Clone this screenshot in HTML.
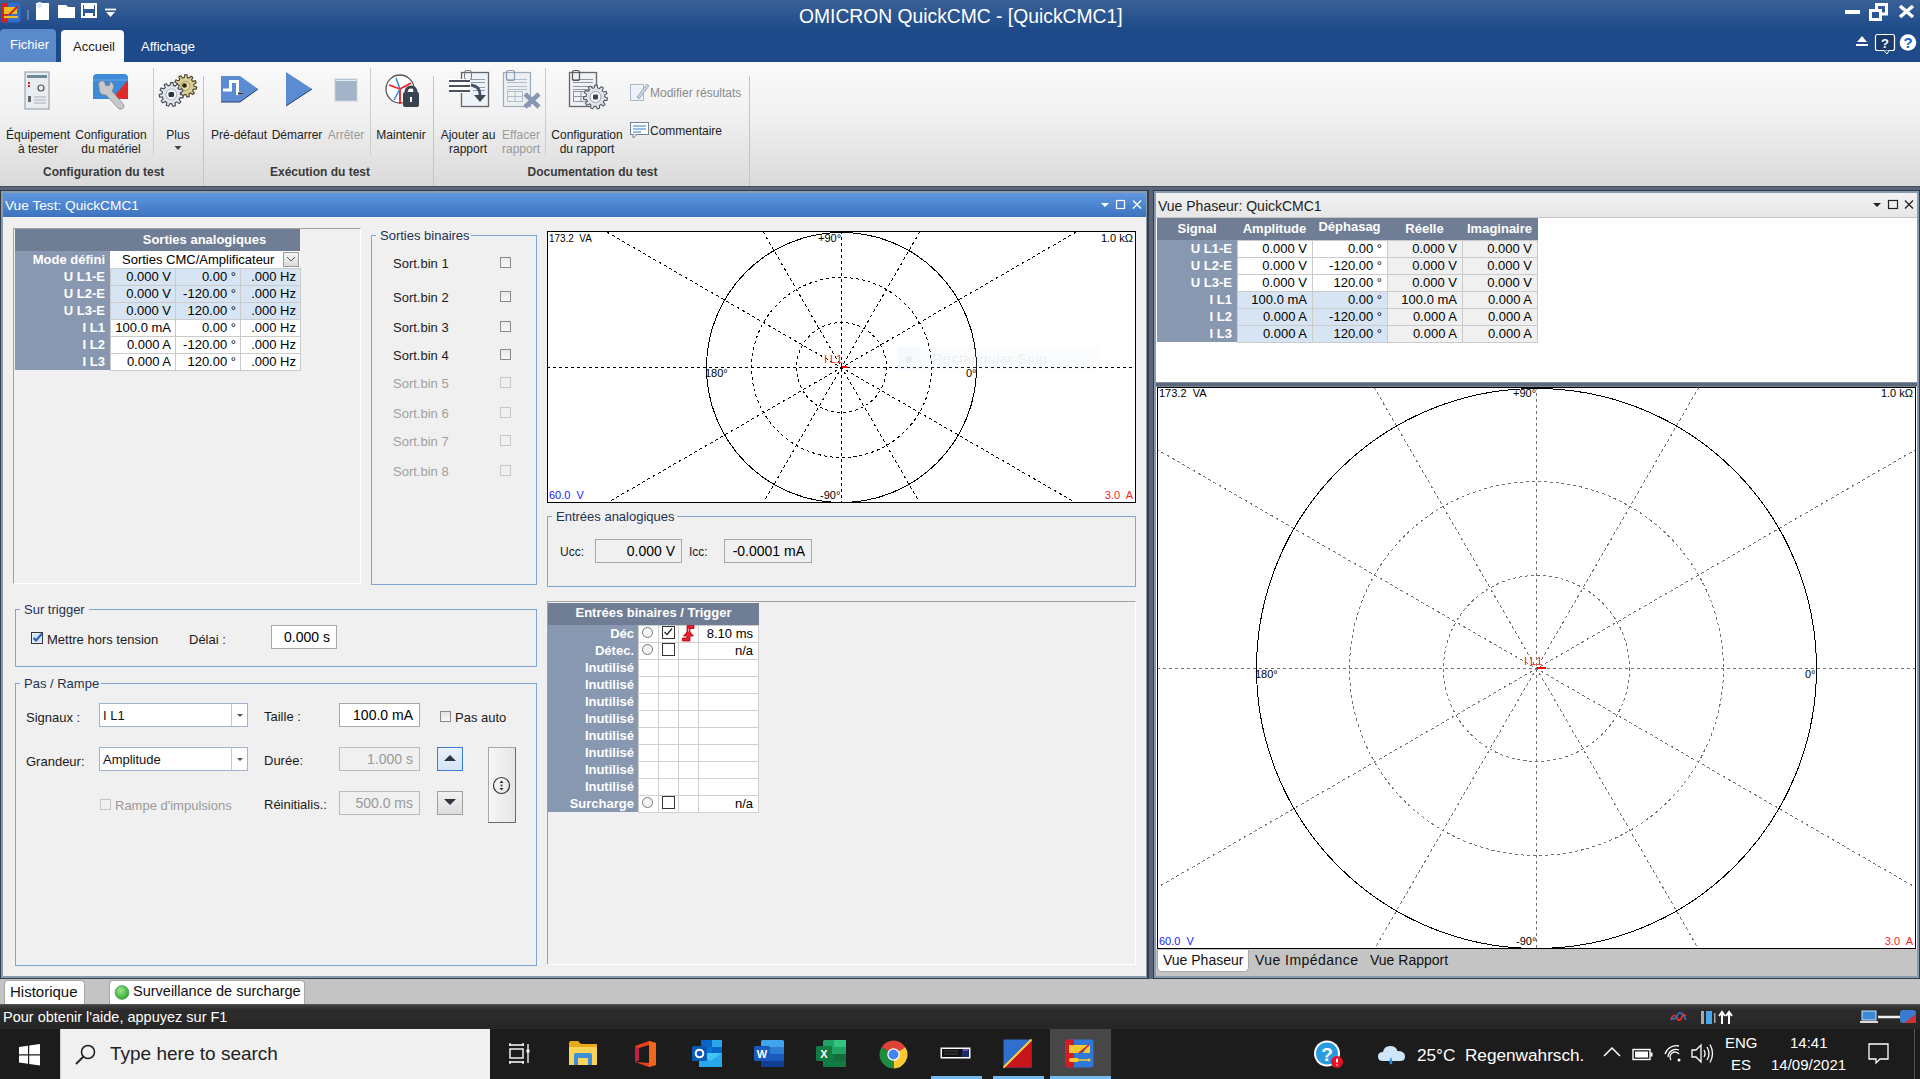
<!DOCTYPE html>
<html><head><meta charset="utf-8">
<style>
*{margin:0;padding:0;box-sizing:border-box}
html,body{width:1920px;height:1079px;overflow:hidden;background:#f0f0f0;font-family:"Liberation Sans",sans-serif;font-size:12px;color:#000}
.a{position:absolute}
.t{position:absolute;white-space:nowrap}
#titlebar{left:0;top:0;width:1920px;height:62px;background:linear-gradient(#3b6296 0px,#24508e 22px,#1e4a8a 30px,#1e4a8a 62px)}
#ribbon{left:0;top:62px;width:1920px;height:124px;background:linear-gradient(#fafafa,#f2f2f2 40%,#dadada)}
#band{left:0;top:186px;width:1920px;height:7px;background:#5a6679}
.gsep{position:absolute;top:66px;width:1px;height:118px;background:#c8c8c8}
.rl{position:absolute;text-align:center;color:#222;font-size:12px;line-height:14px;white-space:nowrap}
.glab{position:absolute;top:165px;font-size:12px;font-weight:bold;color:#3a3a3a;white-space:nowrap}
.win{position:absolute;background:#f0f0f0}
</style></head><body>
<!-- title bar -->
<div id="titlebar" class="a"></div>
<div class="t" style="left:799px;top:6px;font-size:19.3px;color:#fff">OMICRON QuickCMC - [QuickCMC1]</div>

<!-- quick access icons -->
<svg class="a" style="left:0;top:0" width="120" height="24" viewBox="0 0 120 24">
 <rect x="1" y="3" width="19.5" height="19.5" rx="2" fill="#2f6fd0"/>
 <path d="M1 5 L1 20.5 Q1 22.5 3 22.5 L8 22.5 L8 3 L3 3 Q1 3 1 5Z" fill="#d42020"/>
 <path d="M4 7 L17 7 L17 14 L4 14Z" fill="#f0c020"/>
 <path d="M4 17 L18 17" stroke="#f0c020" stroke-width="2.2"/>
 <path d="M9 15 L18 6" stroke="#d42020" stroke-width="1.8"/>
 <rect x="27.5" y="10" width="1" height="10" fill="#8fa6c8"/>
 <path d="M36 3 L49 3 L49 20 L36 20Z" fill="#fff"/>
 <circle cx="39.5" cy="5.5" r="3" fill="#d8e6ff" stroke="#fff"/>
 <path d="M58 5 L66 5 L68 7 L75 7 L75 18 L58 18Z" fill="#fff"/>
 <path d="M82 4 L96 4 L96 17 L82 17Z" fill="none" stroke="#fff" stroke-width="2"/>
 <rect x="84" y="4" width="10" height="5" fill="#fff"/>
 <rect x="85" y="13" width="8" height="4" fill="#fff"/>
 <path d="M105 9.5 L116 9.5" stroke="#fff" stroke-width="1.8"/>
 <path d="M106 12 L115 12 L110.5 17Z" fill="#fff"/>
</svg>
<!-- window controls -->
<svg class="a" style="left:1840px;top:0px" width="80" height="28" viewBox="0 0 80 28">
 <rect x="5" y="10" width="15" height="4" fill="#fff"/>
 <rect x="30.5" y="10.5" width="10" height="9" fill="none" stroke="#fff" stroke-width="3"/>
 <path d="M36.5 9 L36.5 4.5 L46.5 4.5 L46.5 14 L42 14" fill="none" stroke="#fff" stroke-width="3"/>
 <path d="M60 6 L73 17 M73 6 L60 17" stroke="#fff" stroke-width="3.6"/>
</svg>
<svg class="a" style="left:1852px;top:32px" width="68" height="24" viewBox="0 0 68 24">
 <path d="M5 10 L10 4 L15 10Z" fill="#fff"/><rect x="4" y="12" width="12" height="2" fill="#fff"/>
 <rect x="23.5" y="2.5" width="19" height="16" rx="2" fill="#1a3a6a" stroke="#fff" stroke-width="1.2"/>
 <path d="M32 18.5 L35 22 L37 18.5" fill="#1a3a6a" stroke="#fff"/>
 <text x="33" y="15.5" font-family="Liberation Sans" font-weight="bold" font-size="13" fill="#fff" text-anchor="middle">?</text>
 <circle cx="56" cy="10.5" r="8.3" fill="#fff"/>
 <text x="56" y="16" font-family="Liberation Sans" font-weight="bold" font-size="15" fill="#1565c0" text-anchor="middle">?</text>
</svg>
<!-- tabs -->
<div class="a" style="left:0;top:29px;width:56px;height:33px;background:#5b8acb;border-radius:4px 4px 0 0"></div>
<div class="t" style="left:10px;top:37px;font-size:13px;color:#fff">Fichier</div>
<div class="a" style="left:61px;top:30px;width:63px;height:33px;background:#fafafa;border-radius:4px 4px 0 0"></div>
<div class="t" style="left:73px;top:39px;font-size:13px;color:#222">Accueil</div>
<div class="t" style="left:141px;top:39px;font-size:13px;color:#fff">Affichage</div>
<!-- ribbon -->
<div id="ribbon" class="a"></div>
<div id="band" class="a"></div>
<!-- ribbon separators -->
<div class="a" style="left:153px;top:68px;width:1px;height:87px;background:#cdcdcd"></div>
<div class="a" style="left:203px;top:76px;width:1px;height:110px;background:#c4c4c4"></div>
<div class="a" style="left:370px;top:68px;width:1px;height:87px;background:#cdcdcd"></div>
<div class="a" style="left:433px;top:76px;width:1px;height:110px;background:#c4c4c4"></div>
<div class="a" style="left:545px;top:68px;width:1px;height:87px;background:#cdcdcd"></div>
<div class="a" style="left:749px;top:76px;width:1px;height:110px;background:#c4c4c4"></div>
<!-- ribbon labels -->
<div class="rl" style="left:0px;top:128px;width:76px">Équipement<br>à tester</div>
<div class="rl" style="left:72px;top:128px;width:78px">Configuration<br>du matériel</div>
<div class="rl" style="left:158px;top:128px;width:40px">Plus</div>
<svg class="a" style="left:173px;top:145px" width="10" height="6"><path d="M1.5 1 L8.5 1 L5 5Z" fill="#444"/></svg>
<div class="rl" style="left:206px;top:128px;width:66px">Pré-défaut</div>
<div class="rl" style="left:270px;top:128px;width:54px">Démarrer</div>
<div class="rl" style="left:324px;top:128px;width:44px;color:#9a9a9a">Arrêter</div>
<div class="rl" style="left:372px;top:128px;width:58px">Maintenir</div>
<div class="rl" style="left:436px;top:128px;width:64px">Ajouter au<br>rapport</div>
<div class="rl" style="left:500px;top:128px;width:42px;color:#9a9a9a">Effacer<br>rapport</div>
<div class="rl" style="left:548px;top:128px;width:78px">Configuration<br>du rapport</div>
<div class="t" style="left:650px;top:86px;color:#8a8a8a;font-size:12px">Modifier résultats</div>
<div class="t" style="left:650px;top:124px;color:#222;font-size:12px">Commentaire</div>
<div class="glab" style="left:43px;width:120px;text-align:center">Configuration du test</div>
<div class="glab" style="left:270px;width:100px;text-align:center">Exécution du test</div>
<div class="glab" style="left:527px;width:131px;text-align:center">Documentation du test</div>
<!-- ribbon icons -->
<svg class="a" style="left:0;top:66px" width="760" height="50" viewBox="0 66 760 50">
 <!-- equipement -->
 <rect x="25" y="72" width="24" height="37" fill="#e8edf2" stroke="#8a96a3"/>
 <rect x="27" y="75" width="20" height="3" fill="#6d8a95"/>
 <rect x="28" y="82" width="2" height="2" fill="#e02020"/><rect x="28" y="85" width="2" height="2" fill="#e02020"/>
 <circle cx="41" cy="88" r="3" fill="none" stroke="#555" stroke-width="1.2"/>
 <rect x="28" y="96" width="3" height="6" fill="#666"/>
 <path d="M34 97h12M34 100h12M34 103h12" stroke="#aab" stroke-width="1"/>
 <!-- config materiel -->
 <path d="M93 78 Q93 74 97 74 L124 74 Q128 74 128 78 L128 99 L93 99Z" fill="#3d8ad8"/>
 <path d="M93 80 L128 80" stroke="#6aa8e8" stroke-width="1"/>
 <path d="M128 80 L128 99 L112 99Z" fill="#e02a2a"/>
 <path d="M99 87 Q97 80 104 81 L106 86 L110 85 L110 81 Q116 85 112 91 L124 105 Q124 110 119 109 L106 95 Q99 96 99 87Z" fill="#c8c8c8" stroke="#888" stroke-width="0.8"/>
 <!-- gears -->
 <path d="M194.0 86.0 L196.7 87.0 L196.2 89.2 L193.4 89.1 L192.6 90.6 L194.3 92.9 L192.8 94.5 L190.5 93.0 L189.0 93.8 L189.2 96.6 L187.0 97.2 L185.9 94.6 L184.2 94.5 L182.8 97.0 L180.7 96.3 L181.2 93.5 L179.8 92.5 L177.3 93.9 L175.9 92.1 L177.8 90.0 L177.1 88.4 L174.3 88.2 L174.1 86.0 L176.8 85.3 L177.1 83.6 L174.9 81.9 L175.9 79.9 L178.6 80.7 L179.8 79.5 L178.8 76.9 L180.7 75.7 L182.5 77.9 L184.2 77.5 L184.8 74.7 L187.0 74.8 L187.3 77.6 L189.0 78.2 L191.0 76.2 L192.8 77.5 L191.6 80.0 L192.6 81.4 L195.4 80.7 L196.2 82.8 L193.8 84.3Z" fill="#d8cc98" stroke="#4a4020" stroke-width="1.1"/>
 <circle cx="185.4" cy="86" r="4.5" fill="#e8dcaa" stroke="#a89860" stroke-width="1"/>
 <circle cx="184.5" cy="85.5" r="2.3" fill="#2a2410"/>
 <path d="M180.5 94.5 L183.3 95.5 L182.8 97.9 L179.9 97.8 L179.0 99.5 L180.8 101.8 L179.2 103.6 L176.7 101.9 L175.1 102.9 L175.3 105.8 L173.0 106.4 L171.8 103.7 L170.0 103.6 L168.6 106.2 L166.3 105.4 L166.8 102.5 L165.3 101.5 L162.7 102.9 L161.2 101.0 L163.2 98.8 L162.5 97.1 L159.5 96.9 L159.3 94.5 L162.1 93.7 L162.5 91.9 L160.1 90.1 L161.2 88.0 L164.0 88.9 L165.3 87.5 L164.2 84.8 L166.3 83.6 L168.2 85.8 L170.0 85.4 L170.6 82.5 L173.0 82.6 L173.4 85.5 L175.1 86.1 L177.2 84.1 L179.2 85.4 L177.9 88.1 L179.0 89.5 L181.9 88.9 L182.8 91.1 L180.3 92.7Z" fill="#e4e8ee" stroke="#3a4450" stroke-width="1.1"/>
 <circle cx="171.3" cy="94.5" r="5.5" fill="#f6f8fa" stroke="#b0b8c0" stroke-width="1.2"/>
 <rect x="168.5" y="92" width="5.6" height="5" rx="1.5" fill="#2a3440"/>
 <!-- pre-defaut -->
 <path d="M221 76 L240 76 L258 89 L240 102 L221 102Z" fill="#5b8bd2"/>
 <path d="M240 102 L258 89" stroke="#2a3f66" stroke-width="1"/>
 <path d="M221 102 L240 102" stroke="#2a3f66" stroke-width="1"/>
 <path d="M223 90 L230.5 90 L230.5 81.5 L237.5 81.5 L237.5 93.5 L243 93.5" fill="none" stroke="#fff" stroke-width="3"/>
 <path d="M238 93.5 L243 93.5" stroke="#1a2a44" stroke-width="2"/>
 <!-- demarrer -->
 <path d="M286 72 L312 89 L286 106Z" fill="#5b8bd2"/>
 <path d="M312 89 L286 106" stroke="#2a3f66" stroke-width="1"/>
 <!-- arreter -->
 <rect x="335" y="79" width="22" height="22" fill="#a3b3c8" stroke="#c8d2e0" stroke-width="1"/>
 <path d="M336 80.5 L356 80.5" stroke="#e6ecf3" stroke-width="1"/>
 <!-- maintenir -->
 <circle cx="400" cy="89" r="14" fill="#fff" stroke="#555" stroke-width="1.3"/>
 <path d="M400 89 L389 85 M400 89 L411 83 M400 89 L400 104" stroke="#f02020" stroke-width="1.8"/>
 <path d="M400 89 L396 78 M400 89 L394 100" stroke="#2a8ae0" stroke-width="1.5"/>
 <path d="M406 93 Q406 87 411 87 Q416 87 416 93" fill="none" stroke="#3a4450" stroke-width="3"/>
 <rect x="403" y="92" width="16" height="15" rx="2" fill="#3a4450"/>
 <rect x="410" y="97" width="2" height="5" fill="#fff"/>
 <!-- ajouter au rapport -->
 <rect x="461.5" y="72.5" width="27" height="34" fill="#eef3fa" stroke="#666" stroke-width="1.3"/>
 <path d="M471 79.5h14M471 82.5h14M473 87.5h12M473 90.5h12" stroke="#7a8494" stroke-width="0.8"/>
 <rect x="464.5" y="70.5" width="7" height="9" rx="2" fill="none" stroke="#777" stroke-width="1"/>
 <rect x="449" y="79" width="21" height="14" fill="#fff"/>
 <path d="M449 81h21M449 86h21M449 91h21" stroke="#4a5260" stroke-width="1.8"/>
 <path d="M471 85 Q480 86 480 95" fill="none" stroke="#455366" stroke-width="3"/>
 <path d="M474 95 L486 95 L480 102Z" fill="#3a4858"/>
 <!-- effacer rapport -->
 <rect x="503.5" y="72.5" width="27" height="34" fill="#eef0f0" stroke="#9aaac0" stroke-width="1.2"/>
 <path d="M507 79.5h20M507 82.5h20M507 86.5h20M507 89.5h20" stroke="#aab8cc" stroke-width="0.9"/>
 <rect x="507.5" y="91.5" width="15" height="10" fill="none" stroke="#aab8cc" stroke-width="0.9"/>
 <path d="M515 91.5v10M507.5 96.5h15" stroke="#aab8cc" stroke-width="0.9"/>
 <rect x="506.5" y="70.5" width="8" height="10" rx="2" fill="none" stroke="#8a9cb8" stroke-width="1.2"/>
 <path d="M525 94 L539 107 M539 94 L525 107" stroke="#8797b3" stroke-width="4.5"/>
 <!-- config rapport -->
 <rect x="569.5" y="72.5" width="27" height="34" fill="#eef3fa" stroke="#666" stroke-width="1.3"/>
 <path d="M573 79.5h20M573 82.5h20M573 86.5h20M573 89.5h20" stroke="#8a8a8a" stroke-width="0.9"/>
 <rect x="573.5" y="91.5" width="15" height="10" fill="none" stroke="#8a8a8a" stroke-width="0.9"/>
 <path d="M581 91.5v10M573.5 96.5h15" stroke="#8a8a8a" stroke-width="0.9"/>
 <rect x="572.5" y="70.5" width="7" height="10" rx="2" fill="none" stroke="#555" stroke-width="1.2"/>
 <path d="M604.8 97.0 L607.5 98.0 L607.0 100.4 L604.2 100.4 L603.3 102.0 L605.0 104.3 L603.4 106.1 L601.0 104.5 L599.4 105.5 L599.5 108.3 L597.2 108.9 L596.0 106.3 L594.2 106.2 L592.8 108.7 L590.5 107.9 L590.9 105.1 L589.4 104.0 L586.9 105.4 L585.4 103.5 L587.3 101.3 L586.6 99.6 L583.7 99.4 L583.5 97.0 L586.2 96.2 L586.6 94.4 L584.3 92.6 L585.4 90.5 L588.1 91.3 L589.4 90.0 L588.4 87.3 L590.5 86.1 L592.4 88.2 L594.2 87.8 L594.8 85.0 L597.2 85.1 L597.6 87.9 L599.4 88.5 L601.4 86.6 L603.4 87.9 L602.2 90.5 L603.3 92.0 L606.1 91.4 L607.0 93.6 L604.6 95.2Z" fill="#dfe3e8" stroke="#555d66" stroke-width="1.1"/>
 <circle cx="595.5" cy="97" r="5.5" fill="#f4f6f8" stroke="#9aa0a8" stroke-width="1"/>
 <rect x="593" y="94.5" width="5" height="5" rx="1" fill="#3a4450"/>
 <!-- modifier resultats -->
 <rect x="630.5" y="84.5" width="13" height="16" fill="#eef2f6" stroke="#a8b8c8"/>
 <path d="M637 97 L647 84 L649 86 L639 99Z" fill="#c8d4e0" stroke="#8aa0b8" stroke-width="0.8"/>
 <!-- commentaire -->
 <rect x="630.5" y="122.5" width="18" height="13" fill="#fff" stroke="#7a8ca0"/>
</svg>
<svg class="a" style="left:630px;top:122px" width="20" height="18" viewBox="0 0 20 18">
 <rect x="0.5" y="0.5" width="18" height="12" fill="#fff" stroke="#6f8399"/>
 <path d="M3 4h13M3 7h13M3 10h8" stroke="#2f7ad8" stroke-width="1.2"/>
 <path d="M3 12.5 L3 16 L7 12.5" fill="#fff" stroke="#6f8399"/>
</svg>


<!-- left window -->
<div class="a" style="left:0;top:186px;width:1920px;height:793px;background:#5b6678"></div>
<div class="a" style="left:0;top:186px;width:1920px;height:1px;background:#474d57"></div>
<div class="a" style="left:0;top:190px;width:1149px;height:789px;background:#333d49"></div>
<div class="a" style="left:1px;top:191px;width:1146px;height:787px;background:#8a9ab0"></div>
<div class="a" style="left:3px;top:217px;width:1143px;height:759px;background:#f0f0f0"></div>
<div class="a" style="left:3px;top:193px;width:1143px;height:24px;background:linear-gradient(#5e98e0,#3d72be)"></div>
<div class="t" style="left:5px;top:198px;font-size:13.7px;color:#fff">Vue Test: QuickCMC1</div>
<svg class="a" style="left:1098px;top:197px" width="46" height="16" viewBox="0 0 46 16">
 <path d="M3 6 L11 6 L7 10Z" fill="#fff"/>
 <rect x="18.5" y="3.5" width="8" height="8" fill="none" stroke="#fff" stroke-width="1.2"/>
 <path d="M35 3.5 L43 11.5 M43 3.5 L35 11.5" stroke="#fff" stroke-width="1.3"/>
</svg>
<!--L1-->
<div class="a" style="left:13px;top:228px;width:348px;height:356px;border:1px solid #a0a0a0;border-right-color:#fff;border-bottom-color:#fff"></div>
<div class="a" style="left:15px;top:229px;width:285px;height:22px;background:#6f7e94"></div>
<div class="t" style="left:62px;top:232px;width:285px;text-align:center;font-weight:bold;font-size:13px;color:#fff">Sorties analogiques</div>
<div class="a" style="left:15px;top:251px;width:95px;height:119px;background:#8898b0"></div>
<div class="t" style="left:15px;top:251px;width:90px;text-align:right;font-weight:bold;font-size:13px;color:#fff;line-height:17px">Mode défini</div>
<div class="a" style="left:110px;top:251px;width:190px;height:17px;background:#fff"></div>
<div class="t" style="left:122px;top:251px;font-size:13px;line-height:17px">Sorties CMC/Amplificateur</div>
<div class="a" style="left:283px;top:252px;width:16px;height:15px;background:linear-gradient(#f4f4f4,#dcdcdc);border:1px solid #9a9a9a"></div>
<svg class="a" style="left:286px;top:255px" width="10" height="8"><path d="M1 2 L5 6 L9 2" fill="none" stroke="#555" stroke-width="1"/></svg>
<div class="t" style="left:15px;top:268px;width:90px;text-align:right;font-weight:bold;font-size:13px;color:#fff;line-height:17px">U L1-E</div>
<div class="a" style="left:110px;top:268px;width:66px;height:18px;background:#d6e4f3;border:1px solid #cbcbcb"></div>
<div class="t" style="left:110px;top:268px;width:61px;text-align:right;font-size:13px;line-height:17px">0.000 V</div>
<div class="a" style="left:175px;top:268px;width:66px;height:18px;background:#d6e4f3;border:1px solid #cbcbcb"></div>
<div class="t" style="left:175px;top:268px;width:61px;text-align:right;font-size:13px;line-height:17px">0.00 °</div>
<div class="a" style="left:240px;top:268px;width:61px;height:18px;background:#d6e4f3;border:1px solid #cbcbcb"></div>
<div class="t" style="left:240px;top:268px;width:56px;text-align:right;font-size:13px;line-height:17px">.000 Hz</div>
<div class="t" style="left:15px;top:285px;width:90px;text-align:right;font-weight:bold;font-size:13px;color:#fff;line-height:17px">U L2-E</div>
<div class="a" style="left:110px;top:285px;width:66px;height:18px;background:#d6e4f3;border:1px solid #cbcbcb"></div>
<div class="t" style="left:110px;top:285px;width:61px;text-align:right;font-size:13px;line-height:17px">0.000 V</div>
<div class="a" style="left:175px;top:285px;width:66px;height:18px;background:#d6e4f3;border:1px solid #cbcbcb"></div>
<div class="t" style="left:175px;top:285px;width:61px;text-align:right;font-size:13px;line-height:17px">-120.00 °</div>
<div class="a" style="left:240px;top:285px;width:61px;height:18px;background:#d6e4f3;border:1px solid #cbcbcb"></div>
<div class="t" style="left:240px;top:285px;width:56px;text-align:right;font-size:13px;line-height:17px">.000 Hz</div>
<div class="t" style="left:15px;top:302px;width:90px;text-align:right;font-weight:bold;font-size:13px;color:#fff;line-height:17px">U L3-E</div>
<div class="a" style="left:110px;top:302px;width:66px;height:18px;background:#d6e4f3;border:1px solid #cbcbcb"></div>
<div class="t" style="left:110px;top:302px;width:61px;text-align:right;font-size:13px;line-height:17px">0.000 V</div>
<div class="a" style="left:175px;top:302px;width:66px;height:18px;background:#d6e4f3;border:1px solid #cbcbcb"></div>
<div class="t" style="left:175px;top:302px;width:61px;text-align:right;font-size:13px;line-height:17px">120.00 °</div>
<div class="a" style="left:240px;top:302px;width:61px;height:18px;background:#d6e4f3;border:1px solid #cbcbcb"></div>
<div class="t" style="left:240px;top:302px;width:56px;text-align:right;font-size:13px;line-height:17px">.000 Hz</div>
<div class="t" style="left:15px;top:319px;width:90px;text-align:right;font-weight:bold;font-size:13px;color:#fff;line-height:17px">I L1</div>
<div class="a" style="left:110px;top:319px;width:66px;height:18px;background:#fff;border:1px solid #cbcbcb"></div>
<div class="t" style="left:110px;top:319px;width:61px;text-align:right;font-size:13px;line-height:17px">100.0 mA</div>
<div class="a" style="left:175px;top:319px;width:66px;height:18px;background:#fff;border:1px solid #cbcbcb"></div>
<div class="t" style="left:175px;top:319px;width:61px;text-align:right;font-size:13px;line-height:17px">0.00 °</div>
<div class="a" style="left:240px;top:319px;width:61px;height:18px;background:#fff;border:1px solid #cbcbcb"></div>
<div class="t" style="left:240px;top:319px;width:56px;text-align:right;font-size:13px;line-height:17px">.000 Hz</div>
<div class="t" style="left:15px;top:336px;width:90px;text-align:right;font-weight:bold;font-size:13px;color:#fff;line-height:17px">I L2</div>
<div class="a" style="left:110px;top:336px;width:66px;height:18px;background:#fff;border:1px solid #cbcbcb"></div>
<div class="t" style="left:110px;top:336px;width:61px;text-align:right;font-size:13px;line-height:17px">0.000 A</div>
<div class="a" style="left:175px;top:336px;width:66px;height:18px;background:#fff;border:1px solid #cbcbcb"></div>
<div class="t" style="left:175px;top:336px;width:61px;text-align:right;font-size:13px;line-height:17px">-120.00 °</div>
<div class="a" style="left:240px;top:336px;width:61px;height:18px;background:#fff;border:1px solid #cbcbcb"></div>
<div class="t" style="left:240px;top:336px;width:56px;text-align:right;font-size:13px;line-height:17px">.000 Hz</div>
<div class="t" style="left:15px;top:353px;width:90px;text-align:right;font-weight:bold;font-size:13px;color:#fff;line-height:17px">I L3</div>
<div class="a" style="left:110px;top:353px;width:66px;height:18px;background:#fff;border:1px solid #cbcbcb"></div>
<div class="t" style="left:110px;top:353px;width:61px;text-align:right;font-size:13px;line-height:17px">0.000 A</div>
<div class="a" style="left:175px;top:353px;width:66px;height:18px;background:#fff;border:1px solid #cbcbcb"></div>
<div class="t" style="left:175px;top:353px;width:61px;text-align:right;font-size:13px;line-height:17px">120.00 °</div>
<div class="a" style="left:240px;top:353px;width:61px;height:18px;background:#fff;border:1px solid #cbcbcb"></div>
<div class="t" style="left:240px;top:353px;width:56px;text-align:right;font-size:13px;line-height:17px">.000 Hz</div>
<div class="a" style="left:371px;top:235px;width:166px;height:350px;border:1px solid #7ea6d3"></div>
<div class="a" style="left:376px;top:228px;width:95px;height:14px;background:#f0f0f0"></div>
<div class="t" style="left:380px;top:228px;font-size:13px;color:#1e3250">Sorties binaires</div>
<div class="t" style="left:393px;top:256px;font-size:13px;color:#1a1a1a">Sort.bin 1</div>
<div class="a" style="left:500px;top:257px;width:11px;height:11px;border:1px solid #8a8a8a;background:linear-gradient(#e8e8e8,#f8f8f8)"></div>
<div class="t" style="left:393px;top:290px;font-size:13px;color:#1a1a1a">Sort.bin 2</div>
<div class="a" style="left:500px;top:291px;width:11px;height:11px;border:1px solid #8a8a8a;background:linear-gradient(#e8e8e8,#f8f8f8)"></div>
<div class="t" style="left:393px;top:320px;font-size:13px;color:#1a1a1a">Sort.bin 3</div>
<div class="a" style="left:500px;top:321px;width:11px;height:11px;border:1px solid #8a8a8a;background:linear-gradient(#e8e8e8,#f8f8f8)"></div>
<div class="t" style="left:393px;top:348px;font-size:13px;color:#1a1a1a">Sort.bin 4</div>
<div class="a" style="left:500px;top:349px;width:11px;height:11px;border:1px solid #8a8a8a;background:linear-gradient(#e8e8e8,#f8f8f8)"></div>
<div class="t" style="left:393px;top:376px;font-size:13px;color:#a0a0a0">Sort.bin 5</div>
<div class="a" style="left:500px;top:377px;width:11px;height:11px;border:1px solid #c8c8c8;background:#f0f0f0"></div>
<div class="t" style="left:393px;top:406px;font-size:13px;color:#a0a0a0">Sort.bin 6</div>
<div class="a" style="left:500px;top:407px;width:11px;height:11px;border:1px solid #c8c8c8;background:#f0f0f0"></div>
<div class="t" style="left:393px;top:434px;font-size:13px;color:#a0a0a0">Sort.bin 7</div>
<div class="a" style="left:500px;top:435px;width:11px;height:11px;border:1px solid #c8c8c8;background:#f0f0f0"></div>
<div class="t" style="left:393px;top:464px;font-size:13px;color:#a0a0a0">Sort.bin 8</div>
<div class="a" style="left:500px;top:465px;width:11px;height:11px;border:1px solid #c8c8c8;background:#f0f0f0"></div>
<div class="a" style="left:547px;top:516px;width:589px;height:71px;border:1px solid #7ea6d3"></div>
<div class="a" style="left:552px;top:510px;width:125px;height:12px;background:#f0f0f0"></div>
<div class="t" style="left:556px;top:509px;font-size:13px;color:#1e3250">Entrées analogiques</div>
<div class="t" style="left:560px;top:545px;font-size:12px;color:#1a1a1a">Ucc:</div>
<div class="a" style="left:595px;top:539px;width:87px;height:24px;background:#f0f0f0;border:1px solid #a8a8a8"></div>
<div class="t" style="left:595px;top:539px;width:80px;text-align:right;font-size:14px;color:#000;line-height:24px">0.000 V</div>
<div class="t" style="left:689px;top:545px;font-size:12px;color:#1a1a1a">Icc:</div>
<div class="a" style="left:724px;top:539px;width:88px;height:24px;background:#f0f0f0;border:1px solid #a8a8a8"></div>
<div class="t" style="left:724px;top:539px;width:81px;text-align:right;font-size:14px;color:#000;line-height:24px">-0.0001 mA</div>
<div class="a" style="left:15px;top:609px;width:522px;height:58px;border:1px solid #7ea6d3"></div>
<div class="a" style="left:20px;top:603px;width:69px;height:12px;background:#f0f0f0"></div>
<div class="t" style="left:24px;top:602px;font-size:13px;color:#1e3250">Sur trigger</div>
<svg class="a" style="left:31px;top:632px" width="14" height="14" viewBox="0 0 14 14"><rect x="0.5" y="0.5" width="11" height="11" fill="#fff" stroke="#333"/><rect x="1.5" y="1.5" width="9" height="9" fill="#cfe2f6"/><path d="M2.5 6 L5 8.5 L11 1.5" fill="none" stroke="#2a5fb0" stroke-width="2"/></svg>
<div class="t" style="left:47px;top:632px;font-size:13px;color:#1a1a1a">Mettre hors tension</div>
<div class="t" style="left:189px;top:632px;font-size:13px;color:#1a1a1a">Délai :</div>
<div class="a" style="left:271px;top:625px;width:66px;height:24px;background:#fff;border:1px solid #a8a8a8"></div>
<div class="t" style="left:271px;top:625px;width:59px;text-align:right;font-size:14px;color:#000;line-height:24px">0.000 s</div>
<div class="a" style="left:15px;top:683px;width:522px;height:283px;border:1px solid #7ea6d3"></div>
<div class="a" style="left:20px;top:677px;width:81px;height:12px;background:#f0f0f0"></div>
<div class="t" style="left:24px;top:676px;font-size:13px;color:#1e3250">Pas / Rampe</div>
<div class="t" style="left:26px;top:710px;font-size:13px;color:#1a1a1a">Signaux :</div>
<div class="a" style="left:99px;top:703px;width:149px;height:24px;background:#fff;border:1px solid #9fb4cc"></div>
<div class="a" style="left:231px;top:704px;width:1px;height:22px;background:#c8c8c8"></div>
<svg class="a" style="left:236px;top:713px" width="8" height="5"><path d="M1 1 L7 1 L4 4Z" fill="#555"/></svg>
<div class="t" style="left:103px;top:704px;font-size:13px;line-height:24px;color:#111">I L1</div>
<div class="t" style="left:264px;top:709px;font-size:13px;color:#1a1a1a">Taille :</div>
<div class="a" style="left:339px;top:703px;width:81px;height:24px;background:#fff;border:1px solid #a8a8a8"></div>
<div class="t" style="left:339px;top:703px;width:74px;text-align:right;font-size:14px;color:#000;line-height:24px">100.0 mA</div>
<div class="a" style="left:440px;top:711px;width:11px;height:11px;border:1px solid #8a8a8a;background:linear-gradient(#e4e4e4,#f8f8f8)"></div>
<div class="t" style="left:455px;top:710px;font-size:13px;color:#1a1a1a">Pas auto</div>
<div class="t" style="left:26px;top:754px;font-size:13px;color:#1a1a1a">Grandeur:</div>
<div class="a" style="left:99px;top:747px;width:149px;height:24px;background:#fff;border:1px solid #9fb4cc"></div>
<div class="a" style="left:231px;top:748px;width:1px;height:22px;background:#c8c8c8"></div>
<svg class="a" style="left:236px;top:757px" width="8" height="5"><path d="M1 1 L7 1 L4 4Z" fill="#555"/></svg>
<div class="t" style="left:103px;top:748px;font-size:13px;line-height:24px;color:#111">Amplitude</div>
<div class="t" style="left:264px;top:753px;font-size:13px;color:#1a1a1a">Durée:</div>
<div class="a" style="left:339px;top:747px;width:81px;height:24px;background:#f0f0f0;border:1px solid #bcbcbc"></div>
<div class="t" style="left:339px;top:747px;width:74px;text-align:right;font-size:14px;color:#9a9a9a;line-height:24px">1.000 s</div>
<div class="a" style="left:437px;top:747px;width:26px;height:24px;border:1px solid #3c7fd0;background:linear-gradient(#eaf2fb,#d4e4f6)"></div>
<svg class="a" style="left:443px;top:753px" width="14" height="10"><path d="M1 8 L13 8 L7 2Z" fill="#2f3640"/></svg>
<div class="a" style="left:100px;top:799px;width:11px;height:11px;border:1px solid #c4c4c4;background:#f0f0f0"></div>
<div class="t" style="left:115px;top:798px;font-size:13px;color:#9a9a9a">Rampe d'impulsions</div>
<div class="t" style="left:264px;top:797px;font-size:13px;color:#1a1a1a">Réinitialis.:</div>
<div class="a" style="left:339px;top:791px;width:81px;height:24px;background:#f0f0f0;border:1px solid #bcbcbc"></div>
<div class="t" style="left:339px;top:791px;width:74px;text-align:right;font-size:14px;color:#9a9a9a;line-height:24px">500.0 ms</div>
<div class="a" style="left:437px;top:791px;width:26px;height:24px;border:1px solid #a0a0a0;background:linear-gradient(#f2f2f2,#dcdcdc)"></div>
<svg class="a" style="left:443px;top:797px" width="14" height="10"><path d="M1 2 L13 2 L7 8Z" fill="#2f3640"/></svg>
<div class="a" style="left:488px;top:747px;width:28px;height:76px;border:1px solid #a8a8a8;border-right-color:#6a6a6a;border-bottom-color:#6a6a6a;background:linear-gradient(90deg,#f6f6f6,#e6e6e6)"></div>
<svg class="a" style="left:492px;top:776px" width="20" height="20" viewBox="0 0 20 20"><circle cx="9.5" cy="9.5" r="8" fill="none" stroke="#333" stroke-width="1.2"/><path d="M9.5 4.5 L7.5 7 L11.5 7Z M9.5 14.5 L7.5 12 L11.5 12Z" fill="#333"/><circle cx="9.5" cy="9.5" r="1" fill="#333"/></svg>
<div class="a" style="left:547px;top:601px;width:589px;height:364px;border:1px solid #a0a0a0;border-right-color:#fff;border-bottom-color:#fff"></div>
<div class="a" style="left:548px;top:603px;width:211px;height:22px;background:#6f7e94"></div>
<div class="t" style="left:548px;top:605px;width:211px;text-align:center;font-weight:bold;font-size:13px;color:#fff">Entrées binaires / Trigger</div>
<div class="a" style="left:548px;top:625px;width:91px;height:187px;background:#8898b0"></div>
<div class="t" style="left:548px;top:625px;width:86px;text-align:right;font-weight:bold;font-size:13px;color:#fff;line-height:17px">Déc</div>
<div class="a" style="left:638px;top:625px;width:21px;height:18px;background:#fff;border:1px solid #cfcfcf"></div>
<div class="a" style="left:658px;top:625px;width:21px;height:18px;background:#fff;border:1px solid #cfcfcf"></div>
<div class="a" style="left:678px;top:625px;width:21px;height:18px;background:#fff;border:1px solid #cfcfcf"></div>
<div class="a" style="left:698px;top:625px;width:61px;height:18px;background:#fff;border:1px solid #cfcfcf"></div>
<div class="t" style="left:548px;top:642px;width:86px;text-align:right;font-weight:bold;font-size:13px;color:#fff;line-height:17px">Détec.</div>
<div class="a" style="left:638px;top:642px;width:21px;height:18px;background:#fff;border:1px solid #cfcfcf"></div>
<div class="a" style="left:658px;top:642px;width:21px;height:18px;background:#fff;border:1px solid #cfcfcf"></div>
<div class="a" style="left:678px;top:642px;width:21px;height:18px;background:#fff;border:1px solid #cfcfcf"></div>
<div class="a" style="left:698px;top:642px;width:61px;height:18px;background:#fff;border:1px solid #cfcfcf"></div>
<div class="t" style="left:548px;top:659px;width:86px;text-align:right;font-weight:bold;font-size:13px;color:#fff;line-height:17px">Inutilisé</div>
<div class="a" style="left:638px;top:659px;width:21px;height:18px;background:#fff;border:1px solid #cfcfcf"></div>
<div class="a" style="left:658px;top:659px;width:21px;height:18px;background:#fff;border:1px solid #cfcfcf"></div>
<div class="a" style="left:678px;top:659px;width:21px;height:18px;background:#fff;border:1px solid #cfcfcf"></div>
<div class="a" style="left:698px;top:659px;width:61px;height:18px;background:#fff;border:1px solid #cfcfcf"></div>
<div class="t" style="left:548px;top:676px;width:86px;text-align:right;font-weight:bold;font-size:13px;color:#fff;line-height:17px">Inutilisé</div>
<div class="a" style="left:638px;top:676px;width:21px;height:18px;background:#fff;border:1px solid #cfcfcf"></div>
<div class="a" style="left:658px;top:676px;width:21px;height:18px;background:#fff;border:1px solid #cfcfcf"></div>
<div class="a" style="left:678px;top:676px;width:21px;height:18px;background:#fff;border:1px solid #cfcfcf"></div>
<div class="a" style="left:698px;top:676px;width:61px;height:18px;background:#fff;border:1px solid #cfcfcf"></div>
<div class="t" style="left:548px;top:693px;width:86px;text-align:right;font-weight:bold;font-size:13px;color:#fff;line-height:17px">Inutilisé</div>
<div class="a" style="left:638px;top:693px;width:21px;height:18px;background:#fff;border:1px solid #cfcfcf"></div>
<div class="a" style="left:658px;top:693px;width:21px;height:18px;background:#fff;border:1px solid #cfcfcf"></div>
<div class="a" style="left:678px;top:693px;width:21px;height:18px;background:#fff;border:1px solid #cfcfcf"></div>
<div class="a" style="left:698px;top:693px;width:61px;height:18px;background:#fff;border:1px solid #cfcfcf"></div>
<div class="t" style="left:548px;top:710px;width:86px;text-align:right;font-weight:bold;font-size:13px;color:#fff;line-height:17px">Inutilisé</div>
<div class="a" style="left:638px;top:710px;width:21px;height:18px;background:#fff;border:1px solid #cfcfcf"></div>
<div class="a" style="left:658px;top:710px;width:21px;height:18px;background:#fff;border:1px solid #cfcfcf"></div>
<div class="a" style="left:678px;top:710px;width:21px;height:18px;background:#fff;border:1px solid #cfcfcf"></div>
<div class="a" style="left:698px;top:710px;width:61px;height:18px;background:#fff;border:1px solid #cfcfcf"></div>
<div class="t" style="left:548px;top:727px;width:86px;text-align:right;font-weight:bold;font-size:13px;color:#fff;line-height:17px">Inutilisé</div>
<div class="a" style="left:638px;top:727px;width:21px;height:18px;background:#fff;border:1px solid #cfcfcf"></div>
<div class="a" style="left:658px;top:727px;width:21px;height:18px;background:#fff;border:1px solid #cfcfcf"></div>
<div class="a" style="left:678px;top:727px;width:21px;height:18px;background:#fff;border:1px solid #cfcfcf"></div>
<div class="a" style="left:698px;top:727px;width:61px;height:18px;background:#fff;border:1px solid #cfcfcf"></div>
<div class="t" style="left:548px;top:744px;width:86px;text-align:right;font-weight:bold;font-size:13px;color:#fff;line-height:17px">Inutilisé</div>
<div class="a" style="left:638px;top:744px;width:21px;height:18px;background:#fff;border:1px solid #cfcfcf"></div>
<div class="a" style="left:658px;top:744px;width:21px;height:18px;background:#fff;border:1px solid #cfcfcf"></div>
<div class="a" style="left:678px;top:744px;width:21px;height:18px;background:#fff;border:1px solid #cfcfcf"></div>
<div class="a" style="left:698px;top:744px;width:61px;height:18px;background:#fff;border:1px solid #cfcfcf"></div>
<div class="t" style="left:548px;top:761px;width:86px;text-align:right;font-weight:bold;font-size:13px;color:#fff;line-height:17px">Inutilisé</div>
<div class="a" style="left:638px;top:761px;width:21px;height:18px;background:#fff;border:1px solid #cfcfcf"></div>
<div class="a" style="left:658px;top:761px;width:21px;height:18px;background:#fff;border:1px solid #cfcfcf"></div>
<div class="a" style="left:678px;top:761px;width:21px;height:18px;background:#fff;border:1px solid #cfcfcf"></div>
<div class="a" style="left:698px;top:761px;width:61px;height:18px;background:#fff;border:1px solid #cfcfcf"></div>
<div class="t" style="left:548px;top:778px;width:86px;text-align:right;font-weight:bold;font-size:13px;color:#fff;line-height:17px">Inutilisé</div>
<div class="a" style="left:638px;top:778px;width:21px;height:18px;background:#fff;border:1px solid #cfcfcf"></div>
<div class="a" style="left:658px;top:778px;width:21px;height:18px;background:#fff;border:1px solid #cfcfcf"></div>
<div class="a" style="left:678px;top:778px;width:21px;height:18px;background:#fff;border:1px solid #cfcfcf"></div>
<div class="a" style="left:698px;top:778px;width:61px;height:18px;background:#fff;border:1px solid #cfcfcf"></div>
<div class="t" style="left:548px;top:795px;width:86px;text-align:right;font-weight:bold;font-size:13px;color:#fff;line-height:17px">Surcharge</div>
<div class="a" style="left:638px;top:795px;width:21px;height:18px;background:#fff;border:1px solid #cfcfcf"></div>
<div class="a" style="left:658px;top:795px;width:21px;height:18px;background:#fff;border:1px solid #cfcfcf"></div>
<div class="a" style="left:678px;top:795px;width:21px;height:18px;background:#fff;border:1px solid #cfcfcf"></div>
<div class="a" style="left:698px;top:795px;width:61px;height:18px;background:#fff;border:1px solid #cfcfcf"></div>
<svg class="a" style="left:642px;top:627px" width="12" height="12"><circle cx="5.5" cy="5.5" r="5" fill="#f4f4f4" stroke="#777" stroke-width="1"/></svg>
<svg class="a" style="left:662px;top:626px" width="14" height="14"><rect x="0.5" y="0.5" width="12" height="12" fill="#fff" stroke="#333"/><path d="M2.5 6 L5 8.5 L10 2.5" fill="none" stroke="#222" stroke-width="1.2"/></svg>
<svg class="a" style="left:682px;top:625px" width="13" height="17" viewBox="0 0 13 17"><path d="M5 0.5 L12 0.5 L12 3.5 L8 3.5 L8 7 L11.5 11 L8 11 L8 16 L0.5 16 L0.5 13 L5 13 L5 11 L1.5 11 L5 7Z" fill="#e8202a" stroke="#b00010" stroke-width="0.8"/><path d="M6.5 4 L6.5 6.5" stroke="#ffb0b0" stroke-width="1"/></svg>
<div class="t" style="left:698px;top:625px;width:55px;text-align:right;font-size:13px;line-height:17px">8.10 ms</div>
<svg class="a" style="left:642px;top:644px" width="12" height="12"><circle cx="5.5" cy="5.5" r="5" fill="#f4f4f4" stroke="#777" stroke-width="1"/></svg>
<svg class="a" style="left:662px;top:643px" width="14" height="14"><rect x="0.5" y="0.5" width="12" height="12" fill="#fff" stroke="#333"/></svg>
<div class="t" style="left:698px;top:642px;width:55px;text-align:right;font-size:13px;line-height:17px">n/a</div>
<svg class="a" style="left:642px;top:797px" width="12" height="12"><circle cx="5.5" cy="5.5" r="5" fill="#f4f4f4" stroke="#777" stroke-width="1"/></svg>
<svg class="a" style="left:662px;top:796px" width="14" height="14"><rect x="0.5" y="0.5" width="12" height="12" fill="#fff" stroke="#333"/></svg>
<div class="t" style="left:698px;top:795px;width:55px;text-align:right;font-size:13px;line-height:17px">n/a</div>
<!--/L1-->
<!-- right window -->
<div class="a" style="left:1153px;top:190px;width:767px;height:789px;background:#333d49"></div>
<div class="a" style="left:1154px;top:191px;width:765px;height:787px;background:#8a9ab0"></div>
<div class="a" style="left:1156px;top:217px;width:761px;height:734px;background:#fff"></div>
<div class="a" style="left:1156px;top:217px;width:761px;height:1px;background:#c4c4c4"></div>
<div class="a" style="left:1156px;top:193px;width:761px;height:24px;background:linear-gradient(#f2f2f2,#e6e6e6)"></div>
<div class="t" style="left:1158px;top:198px;font-size:14px;color:#222">Vue Phaseur: QuickCMC1</div>
<svg class="a" style="left:1868px;top:197px" width="50" height="16" viewBox="0 0 50 16">
 <path d="M5 6 L13 6 L9 10Z" fill="#222"/>
 <rect x="20.5" y="3.5" width="9" height="8" fill="none" stroke="#222" stroke-width="1.2"/>
 <path d="M37 3.5 L45 11.5 M45 3.5 L37 11.5" stroke="#222" stroke-width="1.3"/>
</svg>
<div class="a" style="left:1156px;top:382px;width:761px;height:5px;background:linear-gradient(#9aa6b6,#5a6679 30%,#5a6679 70%,#8a96a6)"></div>
<div class="a" style="left:1156px;top:949px;width:761px;height:27px;background:#c4c4c4"></div>
<!--R1-->
<div class="a" style="left:1157px;top:218px;width:381px;height:22px;background:#6f7e94"></div>
<div class="t" style="left:1157px;top:221px;width:80px;text-align:center;font-weight:bold;font-size:13px;color:#fff">Signal</div>
<div class="t" style="left:1237px;top:221px;width:75px;text-align:center;font-weight:bold;font-size:13px;color:#fff">Amplitude</div>
<div class="t" style="left:1312px;top:219px;width:75px;text-align:center;font-weight:bold;font-size:13px;color:#fff">Déphasag</div>
<div class="t" style="left:1387px;top:221px;width:75px;text-align:center;font-weight:bold;font-size:13px;color:#fff">Réelle</div>
<div class="t" style="left:1462px;top:221px;width:75px;text-align:center;font-weight:bold;font-size:13px;color:#fff">Imaginaire</div>
<div class="a" style="left:1157px;top:240px;width:80px;height:102px;background:#8898b0"></div>
<div class="t" style="left:1157px;top:240px;width:75px;text-align:right;font-weight:bold;font-size:13px;color:#fff;line-height:17px">U L1-E</div>
<div class="a" style="left:1237px;top:240px;width:76px;height:18px;background:#fff;border:1px solid #cbcbcb"></div>
<div class="t" style="left:1237px;top:240px;width:70px;text-align:right;font-size:13px;line-height:17px">0.000 V</div>
<div class="a" style="left:1312px;top:240px;width:76px;height:18px;background:#fff;border:1px solid #cbcbcb"></div>
<div class="t" style="left:1312px;top:240px;width:70px;text-align:right;font-size:13px;line-height:17px">0.00 °</div>
<div class="a" style="left:1387px;top:240px;width:76px;height:18px;background:#f0f0f0;border:1px solid #cbcbcb"></div>
<div class="t" style="left:1387px;top:240px;width:70px;text-align:right;font-size:13px;line-height:17px">0.000 V</div>
<div class="a" style="left:1462px;top:240px;width:76px;height:18px;background:#f0f0f0;border:1px solid #cbcbcb"></div>
<div class="t" style="left:1462px;top:240px;width:70px;text-align:right;font-size:13px;line-height:17px">0.000 V</div>
<div class="t" style="left:1157px;top:257px;width:75px;text-align:right;font-weight:bold;font-size:13px;color:#fff;line-height:17px">U L2-E</div>
<div class="a" style="left:1237px;top:257px;width:76px;height:18px;background:#fff;border:1px solid #cbcbcb"></div>
<div class="t" style="left:1237px;top:257px;width:70px;text-align:right;font-size:13px;line-height:17px">0.000 V</div>
<div class="a" style="left:1312px;top:257px;width:76px;height:18px;background:#fff;border:1px solid #cbcbcb"></div>
<div class="t" style="left:1312px;top:257px;width:70px;text-align:right;font-size:13px;line-height:17px">-120.00 °</div>
<div class="a" style="left:1387px;top:257px;width:76px;height:18px;background:#f0f0f0;border:1px solid #cbcbcb"></div>
<div class="t" style="left:1387px;top:257px;width:70px;text-align:right;font-size:13px;line-height:17px">0.000 V</div>
<div class="a" style="left:1462px;top:257px;width:76px;height:18px;background:#f0f0f0;border:1px solid #cbcbcb"></div>
<div class="t" style="left:1462px;top:257px;width:70px;text-align:right;font-size:13px;line-height:17px">0.000 V</div>
<div class="t" style="left:1157px;top:274px;width:75px;text-align:right;font-weight:bold;font-size:13px;color:#fff;line-height:17px">U L3-E</div>
<div class="a" style="left:1237px;top:274px;width:76px;height:18px;background:#fff;border:1px solid #cbcbcb"></div>
<div class="t" style="left:1237px;top:274px;width:70px;text-align:right;font-size:13px;line-height:17px">0.000 V</div>
<div class="a" style="left:1312px;top:274px;width:76px;height:18px;background:#fff;border:1px solid #cbcbcb"></div>
<div class="t" style="left:1312px;top:274px;width:70px;text-align:right;font-size:13px;line-height:17px">120.00 °</div>
<div class="a" style="left:1387px;top:274px;width:76px;height:18px;background:#f0f0f0;border:1px solid #cbcbcb"></div>
<div class="t" style="left:1387px;top:274px;width:70px;text-align:right;font-size:13px;line-height:17px">0.000 V</div>
<div class="a" style="left:1462px;top:274px;width:76px;height:18px;background:#f0f0f0;border:1px solid #cbcbcb"></div>
<div class="t" style="left:1462px;top:274px;width:70px;text-align:right;font-size:13px;line-height:17px">0.000 V</div>
<div class="t" style="left:1157px;top:291px;width:75px;text-align:right;font-weight:bold;font-size:13px;color:#fff;line-height:17px">I L1</div>
<div class="a" style="left:1237px;top:291px;width:76px;height:18px;background:#d6e4f3;border:1px solid #cbcbcb"></div>
<div class="t" style="left:1237px;top:291px;width:70px;text-align:right;font-size:13px;line-height:17px">100.0 mA</div>
<div class="a" style="left:1312px;top:291px;width:76px;height:18px;background:#d6e4f3;border:1px solid #cbcbcb"></div>
<div class="t" style="left:1312px;top:291px;width:70px;text-align:right;font-size:13px;line-height:17px">0.00 °</div>
<div class="a" style="left:1387px;top:291px;width:76px;height:18px;background:#f0f0f0;border:1px solid #cbcbcb"></div>
<div class="t" style="left:1387px;top:291px;width:70px;text-align:right;font-size:13px;line-height:17px">100.0 mA</div>
<div class="a" style="left:1462px;top:291px;width:76px;height:18px;background:#f0f0f0;border:1px solid #cbcbcb"></div>
<div class="t" style="left:1462px;top:291px;width:70px;text-align:right;font-size:13px;line-height:17px">0.000 A</div>
<div class="t" style="left:1157px;top:308px;width:75px;text-align:right;font-weight:bold;font-size:13px;color:#fff;line-height:17px">I L2</div>
<div class="a" style="left:1237px;top:308px;width:76px;height:18px;background:#d6e4f3;border:1px solid #cbcbcb"></div>
<div class="t" style="left:1237px;top:308px;width:70px;text-align:right;font-size:13px;line-height:17px">0.000 A</div>
<div class="a" style="left:1312px;top:308px;width:76px;height:18px;background:#d6e4f3;border:1px solid #cbcbcb"></div>
<div class="t" style="left:1312px;top:308px;width:70px;text-align:right;font-size:13px;line-height:17px">-120.00 °</div>
<div class="a" style="left:1387px;top:308px;width:76px;height:18px;background:#f0f0f0;border:1px solid #cbcbcb"></div>
<div class="t" style="left:1387px;top:308px;width:70px;text-align:right;font-size:13px;line-height:17px">0.000 A</div>
<div class="a" style="left:1462px;top:308px;width:76px;height:18px;background:#f0f0f0;border:1px solid #cbcbcb"></div>
<div class="t" style="left:1462px;top:308px;width:70px;text-align:right;font-size:13px;line-height:17px">0.000 A</div>
<div class="t" style="left:1157px;top:325px;width:75px;text-align:right;font-weight:bold;font-size:13px;color:#fff;line-height:17px">I L3</div>
<div class="a" style="left:1237px;top:325px;width:76px;height:18px;background:#d6e4f3;border:1px solid #cbcbcb"></div>
<div class="t" style="left:1237px;top:325px;width:70px;text-align:right;font-size:13px;line-height:17px">0.000 A</div>
<div class="a" style="left:1312px;top:325px;width:76px;height:18px;background:#d6e4f3;border:1px solid #cbcbcb"></div>
<div class="t" style="left:1312px;top:325px;width:70px;text-align:right;font-size:13px;line-height:17px">120.00 °</div>
<div class="a" style="left:1387px;top:325px;width:76px;height:18px;background:#f0f0f0;border:1px solid #cbcbcb"></div>
<div class="t" style="left:1387px;top:325px;width:70px;text-align:right;font-size:13px;line-height:17px">0.000 A</div>
<div class="a" style="left:1462px;top:325px;width:76px;height:18px;background:#f0f0f0;border:1px solid #cbcbcb"></div>
<div class="t" style="left:1462px;top:325px;width:70px;text-align:right;font-size:13px;line-height:17px">0.000 A</div>
<div class="a" style="left:1157px;top:950px;width:92px;height:22px;background:#fff;border:1px solid #a8a8a8;border-top:none;border-radius:0 0 5px 5px"></div>
<div class="t" style="left:1163px;top:952px;font-size:14px;color:#111">Vue Phaseur</div>
<div class="t" style="left:1255px;top:952px;font-size:14px;color:#111;letter-spacing:0.45px">Vue Impédance</div>
<div class="t" style="left:1370px;top:952px;font-size:14px;color:#111">Vue Rapport</div>
<svg class="a" style="left:547px;top:231px" width="589" height="272" viewBox="0 0 589 272" shape-rendering="crispEdges"><rect x="0" y="0" width="589" height="272" fill="#fff"/><g stroke="#000" stroke-width="1" stroke-dasharray="3 3" fill="none" shape-rendering="crispEdges"><line x1="0" y1="136.5" x2="589" y2="136.5"/><line x1="294.5" y1="0" x2="294.5" y2="272"/></g><g stroke="#000" stroke-width="1" stroke-dasharray="3 3" fill="none"><line x1="-1437.6" y1="1136.5" x2="2026.6" y2="-863.5"/><line x1="-705.5" y1="1868.6" x2="1294.5" y2="-1595.6"/><line x1="1294.5" y1="1868.6" x2="-705.5" y2="-1595.6"/><line x1="2026.6" y1="1136.5" x2="-1437.6" y2="-863.5"/><circle cx="294.5" cy="136.5" r="45"/><circle cx="294.5" cy="136.5" r="90"/></g><circle cx="294.5" cy="136.5" r="135" fill="none" stroke="#000" stroke-width="1"/><rect x="0.5" y="0.5" width="588" height="271" fill="none" stroke="#000" stroke-width="1"/></svg><div class="t" style="left:549px;top:232px;font-size:11px;font-family:'Liberation Sans';transform:scaleX(0.9);transform-origin:left">173.2&nbsp; VA</div>
<div class="t" style="left:1080px;top:232px;width:53px;text-align:right;font-size:11px;font-family:'Liberation Sans';">1.0 kΩ</div>
<div class="t" style="left:549px;top:489px;font-size:11px;font-family:'Liberation Sans';color:#2020ff">60.0&nbsp; V</div>
<div class="t" style="left:1080px;top:489px;width:53px;text-align:right;font-size:11px;font-family:'Liberation Sans';color:#ff2020">3.0&nbsp; A</div>
<div class="t" style="left:818px;top:232px;font-size:11px;font-family:'Liberation Sans';">+90°</div>
<div class="t" style="left:820px;top:489px;font-size:11px;font-family:'Liberation Sans';">-90°</div>
<div class="t" style="left:705px;top:367px;font-size:11px;font-family:'Liberation Sans';">180°</div>
<div class="t" style="left:966px;top:367px;font-size:11px;font-family:'Liberation Sans';">0°</div>
<div class="t" style="left:824px;top:353px;font-size:11px;font-family:'Liberation Sans';color:#ff2020">I L1</div>
<div class="a" style="left:842px;top:366px;width:5px;height:2px;background:#ff0000"></div>
<div class="a" style="left:897px;top:347px;width:202px;height:24px;background:rgba(215,230,250,0.12)"></div>
<div class="a" style="left:897px;top:347px;width:24px;height:24px;background:rgba(215,230,250,0.10)"></div>
<div class="a" style="left:905px;top:356px;width:7px;height:7px;background:rgba(200,200,200,0.25);border-radius:50%"></div>
<div class="t" style="left:932px;top:350px;font-size:15px;color:rgba(180,180,180,0.18)">Rectangular Snip</div>
<svg class="a" style="left:1157px;top:387px" width="759" height="562" viewBox="0 0 759 562" shape-rendering="crispEdges"><rect x="0" y="0" width="759" height="562" fill="#fff"/><g stroke="#707070" stroke-width="1" stroke-dasharray="3 3" fill="none" shape-rendering="crispEdges"><line x1="0" y1="281.5" x2="759" y2="281.5"/><line x1="379.5" y1="0" x2="379.5" y2="562"/></g><g stroke="#707070" stroke-width="1" stroke-dasharray="3 3" fill="none"><line x1="-1352.6" y1="1281.5" x2="2111.6" y2="-718.5"/><line x1="-620.5" y1="2013.6" x2="1379.5" y2="-1450.6"/><line x1="1379.5" y1="2013.6" x2="-620.5" y2="-1450.6"/><line x1="2111.6" y1="1281.5" x2="-1352.6" y2="-718.5"/><circle cx="379.5" cy="281.5" r="93"/><circle cx="379.5" cy="281.5" r="187"/></g><circle cx="379.5" cy="281.5" r="280" fill="none" stroke="#000" stroke-width="1"/><rect x="0.5" y="0.5" width="758" height="561" fill="none" stroke="#000" stroke-width="1"/></svg><div class="t" style="left:1159px;top:387px;font-size:11px;font-family:'Liberation Sans';">173.2&nbsp; VA</div>
<div class="t" style="left:1850px;top:387px;width:63px;text-align:right;font-size:11px;font-family:'Liberation Sans';">1.0 kΩ</div>
<div class="t" style="left:1159px;top:935px;font-size:11px;font-family:'Liberation Sans';color:#2020ff">60.0&nbsp; V</div>
<div class="t" style="left:1850px;top:935px;width:63px;text-align:right;font-size:11px;font-family:'Liberation Sans';color:#ff2020">3.0&nbsp; A</div>
<div class="t" style="left:1513px;top:387px;font-size:11px;font-family:'Liberation Sans';">+90°</div>
<div class="t" style="left:1516px;top:935px;font-size:11px;font-family:'Liberation Sans';">-90°</div>
<div class="t" style="left:1255px;top:668px;font-size:11px;font-family:'Liberation Sans';">180°</div>
<div class="t" style="left:1805px;top:668px;font-size:11px;font-family:'Liberation Sans';">0°</div>
<div class="t" style="left:1524px;top:655px;font-size:11px;font-family:'Liberation Sans';color:#ff2020">I L1</div>
<div class="a" style="left:1537px;top:667px;width:9px;height:2px;background:#ff0000"></div>
<!--/R1-->
<!--B1-->
<div class="a" style="left:0px;top:979px;width:1920px;height:25px;background:#c4c4c4"></div>
<div class="a" style="left:4px;top:980px;width:81px;height:25px;background:#fff;border:1px solid #a6a6a6;border-bottom:none;border-radius:4px 4px 0 0"></div>
<div class="t" style="left:10px;top:983px;font-size:15px;color:#111">Historique</div>
<div class="a" style="left:109px;top:980px;width:196px;height:25px;background:#fff;border:1px solid #a6a6a6;border-bottom:none;border-radius:4px 4px 0 0"></div>
<svg class="a" style="left:114px;top:985px" width="16" height="16"><defs><radialGradient id="gg" cx="0.4" cy="0.35" r="0.7"><stop offset="0" stop-color="#9de88a"/><stop offset="1" stop-color="#2aa52a"/></radialGradient></defs><circle cx="8" cy="7.5" r="6.8" fill="url(#gg)" stroke="#3b8f3b" stroke-width="0.8"/></svg>
<div class="t" style="left:133px;top:983px;font-size:14.5px;color:#111">Surveillance de surcharge</div>
<div class="a" style="left:0px;top:1004px;width:1920px;height:25px;background:linear-gradient(#5a5a5a 0px,#3a3a3a 2px,#2c2c2c 6px,#262626)"></div>
<div class="t" style="left:3px;top:1009px;font-size:14.5px;color:#fff">Pour obtenir l'aide, appuyez sur F1</div>
<svg class="a" style="left:1668px;top:1008px" width="72" height="18" viewBox="0 0 72 18">
 <path d="M3 12 Q6 4 9 10 Q12 16 15 6 L18 8" fill="none" stroke="#ff2020" stroke-width="1.8"/>
 <path d="M3 9 Q7 14 10 6 Q13 2 18 12" fill="none" stroke="#2a7ad0" stroke-width="1.4"/>
 <rect x="33" y="3" width="3" height="13" fill="#aaa"/><rect x="38" y="3" width="6" height="13" fill="#4aa8e8"/><rect x="46" y="5" width="1.5" height="10" fill="#aaa"/>
 <path d="M54 16 L54 6 M51 8 L54 4 L57 8 M61 16 L61 6 M58 8 L61 4 L64 8" fill="none" stroke="#fff" stroke-width="2"/>
</svg>
<svg class="a" style="left:1860px;top:1008px" width="58" height="18" viewBox="0 0 58 18">
 <rect x="2" y="3" width="14" height="9" fill="#3a8ad8" stroke="#cfe3f8"/><path d="M0 14 L18 14" stroke="#ddd" stroke-width="2"/>
 <path d="M18 9 L42 9" stroke="#eee" stroke-width="2.5"/>
 <rect x="40" y="2" width="16" height="13" rx="3" fill="#3a7ad0"/><path d="M44 15 L56 15 L56 6Z" fill="#d03030"/>
</svg>
<div class="a" style="left:0px;top:1029px;width:1920px;height:50px;background:#1c1c1c"></div>
<svg class="a" style="left:19px;top:1044px" width="22" height="22" viewBox="0 0 22 22"><path d="M0 3 L9 1.8 L9 10.2 L0 10.2Z M10.2 1.6 L21 0 L21 10.2 L10.2 10.2Z M0 11.4 L9 11.4 L9 19.8 L0 18.6Z M10.2 11.4 L21 11.4 L21 21.5 L10.2 20Z" fill="#fff"/></svg>
<div class="a" style="left:60px;top:1029px;width:430px;height:50px;background:#f0f0f0;border-left:1px solid #d0d0d0"></div>
<svg class="a" style="left:74px;top:1043px" width="24" height="24" viewBox="0 0 24 24"><circle cx="14" cy="9" r="6.5" fill="none" stroke="#222" stroke-width="1.6"/><path d="M9.5 13.5 L2 21" stroke="#222" stroke-width="1.8"/></svg>
<div class="t" style="left:110px;top:1043px;font-size:19px;color:#222">Type here to search</div>
<svg class="a" style="left:508px;top:1043px" width="24" height="22" viewBox="0 0 24 22"><rect x="2" y="6" width="13" height="9" fill="none" stroke="#fff" stroke-width="1.4"/><path d="M1 2 L16 2 M2 0 L2 3 M15 0 L15 3 M1 19 L16 19 M2 18 L2 21 M15 18 L15 21" stroke="#fff" stroke-width="1.3"/><path d="M20 1 L20 20" stroke="#fff" stroke-width="1.3"/><rect x="18.5" y="6.5" width="3" height="3" fill="#fff"/></svg>
<svg class="a" style="left:569px;top:1041px" width="30" height="25" viewBox="0 0 30 25"><path d="M0 2 Q0 0 2 0 L9 0 L12 3 L28 3 L28 24 L0 24Z" fill="#e8a818"/><rect x="0" y="6" width="28" height="18" rx="1" fill="#fbd25a"/><path d="M5 24 L5 14 Q5 12 7 12 L21 12 Q23 12 23 14 L23 24 L19 24 L19 17 L9 17 L9 24Z" fill="#3a90d8"/></svg>
<svg class="a" style="left:633px;top:1040px" width="26" height="28" viewBox="0 0 26 28"><path d="M2 6 L16 1 L23 3 L23 25 L16 27 L2 22 L16 23 L16 5 L6 8 L6 20 L2 22Z" fill="#e8421e"/><path d="M16 1 L23 3 L23 25 L16 27Z" fill="#f0661a"/><path d="M2 6 L6 8 L6 20 L2 22Z" fill="#c02048"/></svg>
<svg class="a" style="left:692px;top:1040px" width="31" height="28" viewBox="0 0 31 28"><rect x="9" y="0" width="21" height="14" fill="#0a64c8"/><rect x="20" y="0" width="10" height="7" fill="#28a8ea"/><rect x="9" y="7" width="11" height="7" fill="#0078d4"/><path d="M7 13 L30 13 L30 27 L7 27Z" fill="#28a8ea"/><path d="M7 13 L18.5 21 L30 13" fill="#50d9ff" opacity="0.6"/><rect x="0" y="6" width="15" height="15" rx="1.5" fill="#0a5ab4"/><circle cx="7.5" cy="13.5" r="3.8" fill="none" stroke="#fff" stroke-width="2"/></svg>
<svg class="a" style="left:754px;top:1040px" width="31" height="28" viewBox="0 0 31 28"><rect x="7" y="0" width="23" height="27" rx="1.5" fill="#41a5ee"/><rect x="7" y="7" width="23" height="7" fill="#2b7cd3"/><rect x="7" y="14" width="23" height="7" fill="#185abd"/><rect x="7" y="21" width="23" height="6" fill="#103f91"/><rect x="0" y="6" width="16" height="15" rx="1.5" fill="#185abd"/><text x="8" y="18" font-family="Liberation Sans" font-weight="bold" font-size="11" fill="#fff" text-anchor="middle">W</text></svg>
<svg class="a" style="left:816px;top:1040px" width="31" height="28" viewBox="0 0 31 28"><rect x="7" y="0" width="23" height="27" rx="1.5" fill="#21a366"/><rect x="18" y="0" width="12" height="7" fill="#33c481"/><rect x="7" y="14" width="23" height="13" fill="#107c41"/><rect x="18" y="14" width="12" height="7" fill="#185c37" opacity="0.5"/><rect x="0" y="6" width="16" height="15" rx="1.5" fill="#107c41"/><text x="8" y="18" font-family="Liberation Sans" font-weight="bold" font-size="11" fill="#fff" text-anchor="middle">X</text></svg>
<svg class="a" style="left:879px;top:1040px" width="29" height="29" viewBox="0 0 28 28">
<path d="M14 14 L2.5 7 A13.5 13.5 0 0 1 25.5 7Z" fill="#db4437"/>
<path d="M14 14 L25.5 7 A13.5 13.5 0 0 1 14 27.5Z" fill="#fcc934"/>
<path d="M14 14 L14 27.5 A13.5 13.5 0 0 1 2.5 7Z" fill="#1e8e3e"/>
<circle cx="14" cy="14" r="6" fill="#fff"/><circle cx="14" cy="14" r="4.8" fill="#4285f4"/></svg>
<svg class="a" style="left:940px;top:1047px" width="32" height="13" viewBox="0 0 32 13"><rect x="0.5" y="0.5" width="30" height="11" fill="#fff"/><rect x="2" y="2" width="20" height="8" fill="#111"/><path d="M4 4 h14 M4 7 h14" stroke="#444" stroke-width="1"/><rect x="22" y="2" width="7" height="8" fill="#1a2a6a"/><path d="M23 3 h5" stroke="#c060ff"/></svg>
<svg class="a" style="left:1003px;top:1039px" width="30" height="30" viewBox="0 0 30 30"><rect x="0.5" y="0.5" width="28" height="28" fill="#2f6fd0"/><path d="M28.5 0.5 L28.5 28.5 L0.5 28.5Z" fill="#c8141c"/><path d="M0.5 28.5 L28.5 0.5" stroke="#f7d23a" stroke-width="2"/></svg>
<div class="a" style="left:1050px;top:1029px;width:61px;height:50px;background:#474747"></div>
<svg class="a" style="left:1065px;top:1039px" width="30" height="30" viewBox="0 0 30 30"><rect x="0.5" y="0.5" width="28" height="28" rx="2" fill="#2f78d8"/><path d="M0.5 2.5 Q0.5 0.5 2.5 0.5 L9 0.5 L9 28.5 L2.5 28.5 Q0.5 28.5 0.5 26.5Z" fill="#d21c24"/><path d="M4 6 L25 6 L25 14 L18 14 L22 8 L14 14 L4 14Z" fill="#f8c830"/><path d="M14 14 L24 6" stroke="#d21c24" stroke-width="1.6"/><rect x="4" y="19" width="10" height="4" rx="2" fill="#f8c830"/><path d="M14 21 L24 21" stroke="#f8c830" stroke-width="1.5"/><circle cx="24" cy="21" r="1.5" fill="#f8c830"/></svg>
<div class="a" style="left:931px;top:1076px;width:51px;height:3px;background:#76b9ed"></div>
<div class="a" style="left:993px;top:1076px;width:51px;height:3px;background:#76b9ed"></div>
<div class="a" style="left:1050px;top:1076px;width:61px;height:3px;background:#76b9ed"></div>
<svg class="a" style="left:1313px;top:1040px" width="32" height="30" viewBox="0 0 32 30"><circle cx="14" cy="13.5" r="13" fill="#fff"/><circle cx="14" cy="13.5" r="11" fill="#2a9ae0"/><text x="14" y="20.5" font-family="Liberation Sans" font-weight="bold" font-size="19" fill="#fff" text-anchor="middle">?</text><circle cx="24" cy="22" r="6" fill="#e81123"/><path d="M24 18.5 L24 22.5 M24 24.5 L24 25.5" stroke="#fff" stroke-width="1.8"/></svg>
<svg class="a" style="left:1377px;top:1043px" width="30" height="24" viewBox="0 0 30 24"><path d="M6 18 Q1 18 1 13.5 Q1 9 6 9 Q7 3 13 3 Q19 3 20.5 8 Q28 8 28 13.5 Q28 18 23 18Z" fill="#cfe6f8"/><path d="M14 14 Q16 18 15 21 Q13 22 12.5 20 Q12 18 14 14Z" fill="#2a90e0"/></svg>
<div class="t" style="left:1417px;top:1045px;font-size:17.2px;color:#fff">25°C&nbsp; Regenwahrsch.</div>
<svg class="a" style="left:1602px;top:1046px" width="20" height="12" viewBox="0 0 20 12"><path d="M2 10 L10 2 L18 10" fill="none" stroke="#fff" stroke-width="1.5"/></svg>
<svg class="a" style="left:1632px;top:1048px" width="22" height="14" viewBox="0 0 22 14"><rect x="1" y="1.5" width="17" height="10" fill="none" stroke="#fff" stroke-width="1.4"/><rect x="3" y="3.5" width="13" height="6" fill="#fff"/><rect x="18.5" y="4.5" width="2" height="4" fill="#fff"/></svg>
<svg class="a" style="left:1663px;top:1043px" width="20" height="20" viewBox="0 0 20 20"><path d="M2 11 A12 12 0 0 1 16 3 M5 14 A8 8 0 0 1 16 7 M8 17 A4 4 0 0 1 16 11" fill="none" stroke="#fff" stroke-width="1.3"/><circle cx="16" cy="17" r="1.5" fill="#fff"/></svg>
<svg class="a" style="left:1690px;top:1043px" width="25" height="22" viewBox="0 0 25 22"><path d="M2 7 L6 7 L11 2 L11 19 L6 14 L2 14Z" fill="none" stroke="#fff" stroke-width="1.3"/><path d="M14 7 Q16 10.5 14 14 M17 4 Q21 10.5 17 17 M20 1.5 Q25 10.5 20 19.5" fill="none" stroke="#fff" stroke-width="1.3"/></svg>
<div class="t" style="left:1725px;top:1034px;font-size:15px;color:#fff">ENG</div>
<div class="t" style="left:1731px;top:1056px;font-size:15px;color:#fff">ES</div>
<div class="t" style="left:1790px;top:1034px;font-size:15px;color:#fff">14:41</div>
<div class="t" style="left:1771px;top:1056px;font-size:15px;color:#fff">14/09/2021</div>
<svg class="a" style="left:1868px;top:1043px" width="22" height="22" viewBox="0 0 22 22"><path d="M1 1 L20 1 L20 16 L12 16 L8 20 L8 16 L1 16Z" fill="none" stroke="#fff" stroke-width="1.3"/></svg>
<div class="a" style="left:1914px;top:1029px;width:1px;height:50px;background:#555"></div>
<!--/B1-->
</body></html>
